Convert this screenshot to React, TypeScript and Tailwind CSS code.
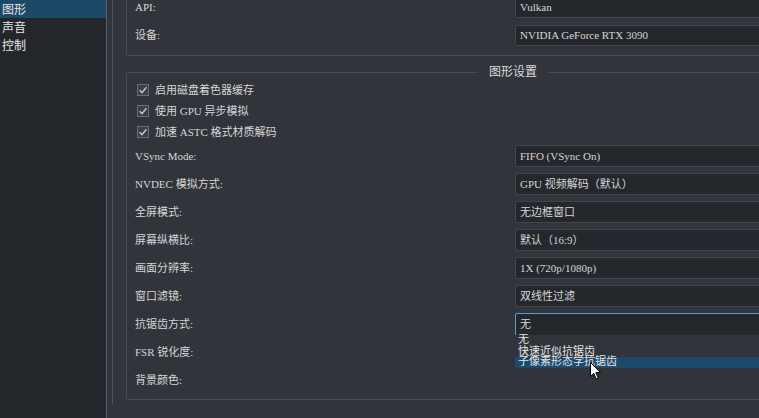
import React from "react";

const FONT = "font-['Liberation_Serif','Noto_Sans_CJK_SC',serif]";

const SIDEBAR = ["图形", "声音", "控制"];

const CHECKS = ["启用磁盘着色器缓存", "使用 GPU 异步模拟", "加速 ASTC 格式材质解码"];

const ROWS: { label: string; value?: string; focused?: boolean }[] = [
  { label: "VSync Mode:", value: "FIFO (VSync On)" },
  { label: "NVDEC 模拟方式:", value: "GPU 视频解码（默认）" },
  { label: "全屏模式:", value: "无边框窗口" },
  { label: "屏幕纵横比:", value: "默认（16:9）" },
  { label: "画面分辨率:", value: "1X (720p/1080p)" },
  { label: "窗口滤镜:", value: "双线性过滤" },
  { label: "抗锯齿方式:", value: "无", focused: true },
  { label: "FSR 锐化度:" },
  { label: "背景颜色:" },
];

function CheckBox() {
  return (
    <svg width="12" height="12" viewBox="0 0 12 12" className="shrink-0">
      <rect x="0.5" y="0.5" width="11" height="11" fill="#3b3f46" stroke="#6a6e75" />
      <path d="M2.6 6.2 L5 8.6 L9.4 3.2" fill="none" stroke="#c4c4c4" strokeWidth="1.5" />
    </svg>
  );
}

function Cursor() {
  return (
    <svg width="12" height="18" viewBox="0 0 12 18" className="absolute left-[590px] top-[362px]">
      <path d="M0.5 0.5 L0.5 14.5 L3.8 11.4 L6.2 17 L8.3 16.1 L5.9 10.6 L10.5 10.6 Z" fill="#ffffff" stroke="#000000" strokeWidth="1" strokeLinejoin="round" />
    </svg>
  );
}

function FormRow({ label, value, focused }: { label: string; value?: string; focused?: boolean }) {
  return (
    <div className="flex items-center h-[22px]">
      <div className="w-[380px] shrink-0 leading-[14px]">{label}</div>
      {value !== undefined && !focused && (
        <div className="flex-1 h-full flex items-center px-[4px] bg-[#24272c] border border-[#42464d] rounded-[2px]">
          {value}
        </div>
      )}
      {focused && (
        <div className="relative flex-1 h-full">
          <div className="h-full flex items-center px-[4px] bg-[#24272c] border border-b-0 border-[#5b9bd5] rounded-t-[2px]">
            {value}
          </div>
          {/* popup caught mid-open, items overlap */}
          <div className="absolute left-0 top-full w-full h-[34px] text-[#e4e4e4]">
            <div className="absolute left-[3px] top-[-1px] leading-[11px]">无</div>
            <div className="absolute left-[3px] top-[11px] leading-[11px]">快速近似抗锯齿</div>
            <div className="absolute left-0 top-[22px] w-full h-[11px] bg-[#1d4a6b]" />
            <div className="absolute left-[3px] top-[21px] leading-[11px]">子像素形态学抗锯齿</div>
          </div>
        </div>
      )}
    </div>
  );
}

export default function App() {
  return (
    <div className={`relative w-[759px] h-[418px] flex overflow-hidden bg-[#31343b] text-[11px] text-[#d6d6d6] ${FONT}`}>
      {/* Sidebar */}
      <aside className="w-[107px] shrink-0 bg-[#23262b] border-r border-[#5b5f67] text-[12px] text-[#e6e6e6] font-['Noto_Sans_CJK_SC',sans-serif]">
        {SIDEBAR.map((s, i) => (
          <div key={s} className={`h-[18px] leading-[17px] pl-[2px] ${i === 0 ? "bg-[#1d4866]" : ""}`}>
            {s}
          </div>
        ))}
      </aside>

      <div className="flex-1 pl-[5px] overflow-hidden">
        <div className="h-full border-l border-[#50545c] pl-[13px]">
          {/* Device group (top cut off) */}
          <div className="w-[774px] -mt-[14px] border border-[#464a52] rounded-[2px] pt-[10px] pb-[9px] pl-[8px] flex flex-col gap-[7px]">
            <div className="flex items-center h-[21px]">
              <div className="w-[380px] shrink-0">API:</div>
              <div className="flex-1 h-full flex items-center px-[4px] bg-[#24272c] border border-[#42464d] rounded-[2px]">Vulkan</div>
            </div>
            <div className="flex items-center h-[21px]">
              <div className="w-[380px] shrink-0">设备:</div>
              <div className="flex-1 h-full flex items-center px-[4px] bg-[#24272c] border border-[#42464d] rounded-[2px]">NVIDIA GeForce RTX 3090</div>
            </div>
          </div>

          {/* Graphics settings group */}
          <div className="relative w-[774px] mt-[16px] border border-[#464a52] rounded-[2px] pt-[6px] pb-[8px] pl-[8px]">
            <div className="absolute left-1/2 -translate-x-1/2 top-[-8px] px-[11px] bg-[#31343b] leading-[14px] text-[12px] text-[#dcdcdc]">
              图形设置
            </div>
            {CHECKS.map(c => (
              <div key={c} className="flex items-center gap-[6px] h-[21px] pl-[2px]">
                <CheckBox />
                <span className="leading-[14px]">{c}</span>
              </div>
            ))}
            <div className="mt-[3px] flex flex-col gap-[6px]">
              {ROWS.map(r => (
                <FormRow key={r.label} label={r.label} value={r.value} focused={r.focused} />
              ))}
            </div>
          </div>
        </div>
      </div>

      <Cursor />
    </div>
  );
}
